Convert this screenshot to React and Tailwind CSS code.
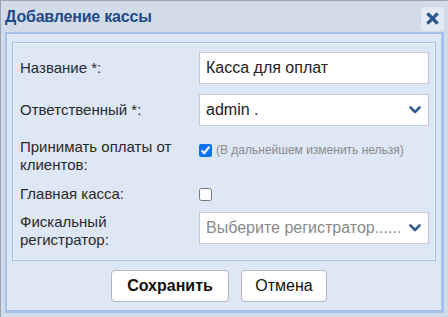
import { useState } from 'react';

const font = { fontFamily: '"Liberation Sans", Arial, sans-serif' };

function Chevron() {
  return (
    <svg width="12" height="8" viewBox="0 0 12 8" className="shrink-0">
      <polyline points="1.5,1.5 6,6 10.5,1.5" fill="none" stroke="#3a5e94" strokeWidth="2.6" strokeLinecap="round" strokeLinejoin="round" />
    </svg>
  );
}

function Select({ value, placeholder }) {
  return (
    <div className="w-[230px] h-[32px] bg-white border border-[#c4c9d1] flex items-center justify-between pl-[6px] pr-[7px]">
      <span className={`text-[16px] ${placeholder ? 'text-[#8a8a8a]' : 'text-[#222]'}`}>{value}</span>
      <Chevron />
    </div>
  );
}

export default function App() {
  const [name, setName] = useState('Касса для оплат');
  const [main, setMain] = useState(false);

  return (
    <div style={font} className="w-[448px] h-[317px] bg-[#d2dce9] border-t border-l border-[#9aa6b5] flex flex-col overflow-hidden">
      <div className="h-[31px] flex items-center justify-between pl-[4px] pr-[4px]">
        <span className="text-[16px] font-bold text-[#1f4a89] tracking-[-0.2px]">Добавление кассы</span>
        <button className="w-[23px] h-[24px] mt-[4px] rounded-[3px] bg-[#e4eaf3] flex items-center justify-center">
          <svg width="13" height="13" viewBox="0 0 13 13">
            <path d="M2.5 2.5 L10.5 10.5 M10.5 2.5 L2.5 10.5" stroke="#2b5790" strokeWidth="3.2" strokeLinecap="square" />
          </svg>
        </button>
      </div>

      <div className="ml-[4px] mr-[4px] h-[281px] bg-[#dee7f5] border-l-2 border-t-2 border-r-[3px] border-b-[3px] border-[#a5c2ea] px-[5px] pt-[8px]">
        <div className="border border-[#a3bfe7] shadow-[inset_0_0_0_1px_#eef3fb] pl-[7px] pr-[6px] pt-[9px] pb-[16px] text-[15px] text-[#2a2a2a]">
          <div className="flex items-center h-[32px]">
            <div className="w-[179px]">Название *:</div>
            <input
              value={name}
              onChange={(e) => setName(e.target.value)}
              className="w-[230px] h-[32px] bg-white border border-[#c4c9d1] px-[6px] text-[16px] text-[#222] outline-none"
            />
          </div>

          <div className="flex items-center h-[32px] mt-[10px]">
            <div className="w-[179px]">Ответственный *:</div>
            <Select value="admin ." />
          </div>

          <div className="flex items-start mt-[12px] leading-[18px]">
            <div className="w-[179px]">Принимать оплаты от<br />клиентов:</div>
            <div className="flex items-center mt-[3px] gap-[4px]">
              <input type="checkbox" checked readOnly className="w-[13px] h-[13px] m-0 accent-[#0b72f0]" />
              <span className="text-[12px] text-[#8a8a8a]">(В дальнейшем изменить нельзя)</span>
            </div>
          </div>

          <div className="flex items-center h-[18px] mt-[11px] leading-[18px]">
            <div className="w-[179px]">Главная касса:</div>
            <input type="checkbox" checked={main} onChange={() => setMain(!main)} className="w-[13px] h-[13px] m-0" />
          </div>

          <div className="flex items-start h-[32px] mt-[9px] leading-[18px]">
            <div className="w-[179px] pt-[1px]">Фискальный<br />регистратор:</div>
            <Select value="Выберите регистратор......" placeholder />
          </div>
        </div>

        <div className="flex justify-center gap-[12px] mt-[9px] pr-[10px]">
          <button className="h-[32px] w-[118px] bg-white border border-[#b3b7bd] rounded-[4px] text-[16px] font-bold text-[#111]">
            Сохранить
          </button>
          <button className="h-[32px] w-[86px] bg-white border border-[#b3b7bd] rounded-[4px] text-[16px] text-[#111]">
            Отмена
          </button>
        </div>
      </div>
    </div>
  );
}
